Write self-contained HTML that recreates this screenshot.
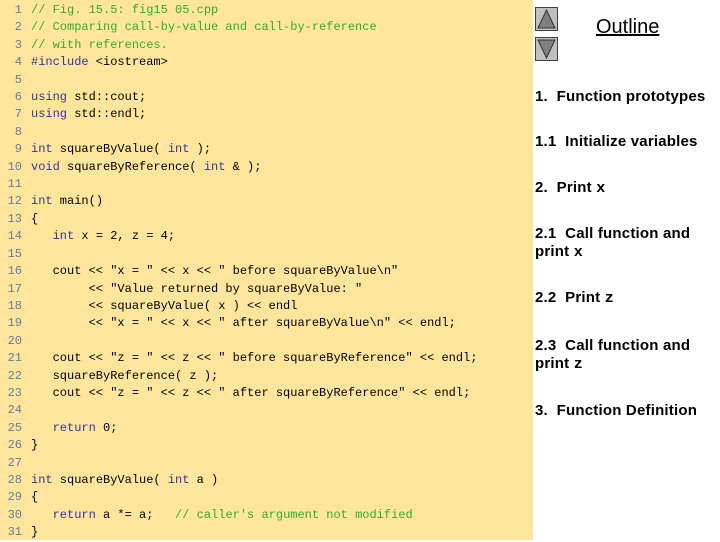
<!DOCTYPE html>
<html><head><meta charset="utf-8"><style>
body{margin:0;width:720px;height:540px;background:#fff;position:relative;overflow:hidden;font-family:"Liberation Sans",sans-serif}
#code{position:absolute;left:0;top:0;width:533px;height:540px;background:#ffe69c}
pre{margin:0;position:absolute;left:0;top:2px;font-family:"Liberation Mono",monospace;font-size:12px;line-height:17.4px;color:#000}
.n{color:#6a7a9a;display:inline-block;width:22px;text-align:right;margin-right:9px}
.c{color:#33aa33}.k{color:#333399}
.b{position:absolute;left:535px;width:21px;height:22px;background:#c0c0c0;border:1px solid #404040}
.t{position:absolute;left:535px;font-size:15px;font-weight:bold;line-height:18px;color:#000;letter-spacing:0.2px}
</style></head><body>
<div id="code"><pre><span class="n">1</span><span class="c">// Fig. 15.5: fig15 05.cpp</span>
<span class="n">2</span><span class="c">// Comparing call-by-value and call-by-reference</span>
<span class="n">3</span><span class="c">// with references.</span>
<span class="n">4</span><span class="k">#include</span> &lt;iostream&gt;
<span class="n">5</span>
<span class="n">6</span><span class="k">using</span> std::cout;
<span class="n">7</span><span class="k">using</span> std::endl;
<span class="n">8</span>
<span class="n">9</span><span class="k">int</span> squareByValue( <span class="k">int</span> );
<span class="n">10</span><span class="k">void</span> squareByReference( <span class="k">int</span> &amp; );
<span class="n">11</span>
<span class="n">12</span><span class="k">int</span> main()
<span class="n">13</span>{
<span class="n">14</span>   <span class="k">int</span> x = 2, z = 4;
<span class="n">15</span>
<span class="n">16</span>   cout &lt;&lt; "x = " &lt;&lt; x &lt;&lt; " before squareByValue\n"
<span class="n">17</span>        &lt;&lt; "Value returned by squareByValue: "
<span class="n">18</span>        &lt;&lt; squareByValue( x ) &lt;&lt; endl
<span class="n">19</span>        &lt;&lt; "x = " &lt;&lt; x &lt;&lt; " after squareByValue\n" &lt;&lt; endl;
<span class="n">20</span>
<span class="n">21</span>   cout &lt;&lt; "z = " &lt;&lt; z &lt;&lt; " before squareByReference" &lt;&lt; endl;
<span class="n">22</span>   squareByReference( z );
<span class="n">23</span>   cout &lt;&lt; "z = " &lt;&lt; z &lt;&lt; " after squareByReference" &lt;&lt; endl;
<span class="n">24</span>
<span class="n">25</span>   <span class="k">return</span> 0;
<span class="n">26</span>}
<span class="n">27</span>
<span class="n">28</span><span class="k">int</span> squareByValue( <span class="k">int</span> a )
<span class="n">29</span>{
<span class="n">30</span>   <span class="k">return</span> a *= a;   <span class="c">// caller's argument not modified</span>
<span class="n">31</span>}</pre></div>
<div class="b" style="top:7px"><svg width="21" height="22"><polygon points="10.5,2 19,20 2,20" fill="#808080" stroke="#303030" stroke-width="1"/></svg></div>
<div class="b" style="top:37px"><svg width="21" height="22"><polygon points="2,2 19,2 10.5,20" fill="#808080" stroke="#303030" stroke-width="1"/></svg></div>
<div style="position:absolute;left:596px;top:16px;font-size:20px;text-decoration:underline">Outline</div>
<div class="t" style="top:88px">1.&nbsp; Function prototypes</div>
<div class="t" style="top:133px">1.1&nbsp; Initialize variables</div>
<div class="t" style="top:179px">2.&nbsp; Print <span style="font-family:'Liberation Mono',monospace">x</span></div>
<div class="t" style="top:225px">2.1&nbsp; Call function and<br>print <span style="font-family:'Liberation Mono',monospace">x</span></div>
<div class="t" style="top:289px">2.2&nbsp; Print <span style="font-family:'Liberation Mono',monospace">z</span></div>
<div class="t" style="top:337px">2.3&nbsp; Call function and<br>print <span style="font-family:'Liberation Mono',monospace">z</span></div>
<div class="t" style="top:402px">3.&nbsp; Function Definition</div>
</body></html>
